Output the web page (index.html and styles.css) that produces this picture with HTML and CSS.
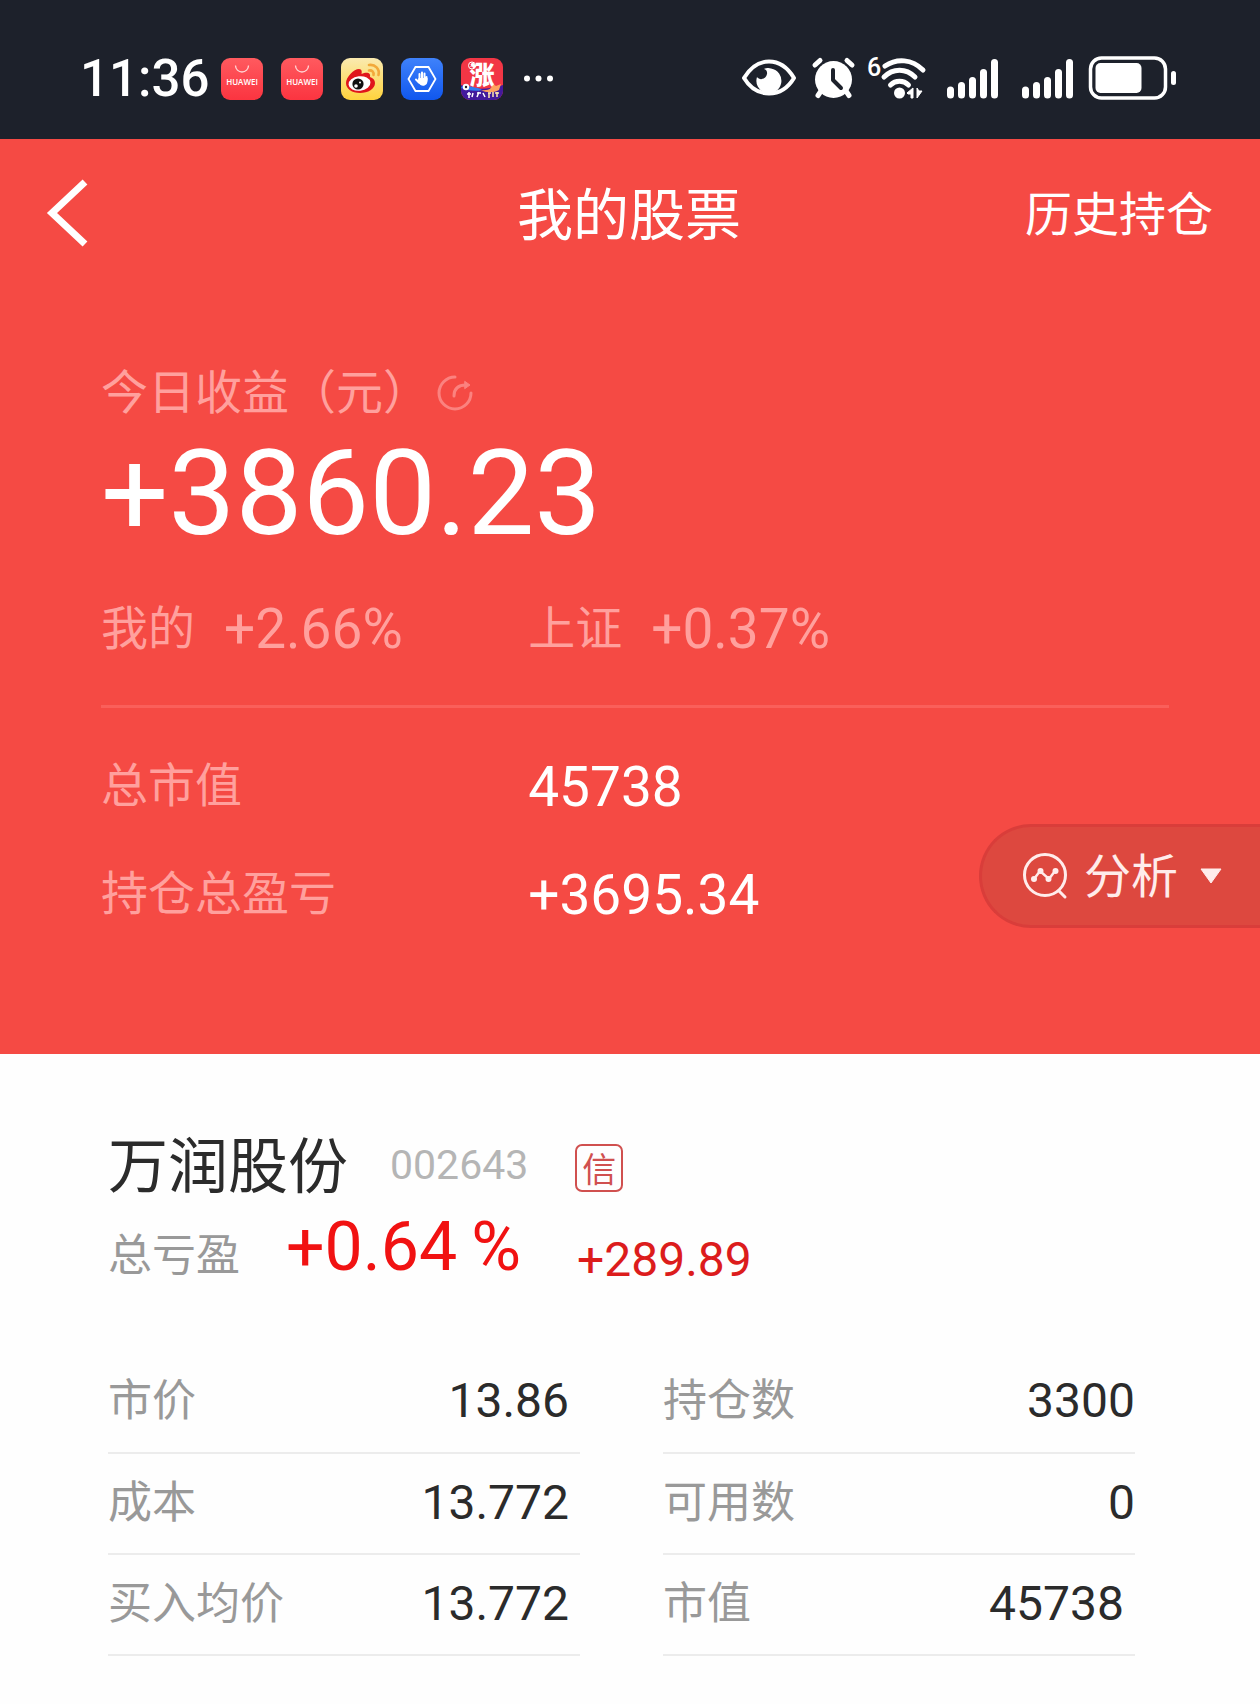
FILE: index.html
```html
<!DOCTYPE html>
<html lang="zh-CN">
<head>
<meta charset="utf-8">
<meta name="viewport" content="width=device-width, initial-scale=1">
<title>我的股票</title>
<link rel="stylesheet" href="styles.css">
</head>
<body>
<div class="status">
  <time class="clock">11:36</time>
  <div class="apps">
    <svg width="42" height="42" viewBox="0 0 42 42"><defs><linearGradient id="hw" x2="0" y2="1"><stop stop-color="#ff5a5f"/><stop offset="1" stop-color="#fb3440"/></linearGradient></defs><rect width="42" height="42" rx="9" fill="url(#hw)"/><path d="M14.500 7.500a6.500 6.500 0 0 0 13 0" fill="none" stroke="#ffd5d5" stroke-width="1.300"/><text class="brand" x="21" y="27" text-anchor="middle">HUAWEI</text></svg>
    <svg width="42" height="42" viewBox="0 0 42 42"><rect width="42" height="42" rx="9" fill="url(#hw)"/><path d="M14.500 7.500a6.500 6.500 0 0 0 13 0" fill="none" stroke="#ffd5d5" stroke-width="1.300"/><text class="brand" x="21" y="27" text-anchor="middle">HUAWEI</text></svg>
    <svg width="42" height="42" viewBox="0 0 42 42"><defs><linearGradient id="wb" x2="0" y2="1"><stop stop-color="#faeab0"/><stop offset="1" stop-color="#ffd33c"/></linearGradient></defs><rect width="42" height="42" rx="9" fill="url(#wb)"/><path d="M5 25C5 19 13 11 18 11c3 0 3 3 2.500 5C25 14 30 14 29 19c3 1 5 3 5 6 0 6-7 10-15 10S5 31 5 25z" fill="#e0161c"/><ellipse cx="18.500" cy="25.500" rx="11" ry="7.200" fill="#fff" transform="rotate(-6 18.500 25.500)"/><circle cx="17" cy="26" r="5.600" fill="#111"/><circle cx="15" cy="28" r="1.800" fill="#fff"/><circle cx="19" cy="24.500" r="1" fill="#fff"/><g fill="none" stroke="#f2a93b" stroke-width="2.600" stroke-linecap="round"><path d="M28 7c6-1 11 4 9.500 10"/><path d="M28 12.500c3-.5 5 1.500 4.500 4.500"/></g></svg>
    <svg width="42" height="42" viewBox="0 0 42 42"><defs><linearGradient id="bl" x2="0" y2="1"><stop stop-color="#3f82fb"/><stop offset="1" stop-color="#1057ee"/></linearGradient></defs><rect width="42" height="42" rx="9" fill="url(#bl)"/><path d="M14.500 9h13L34.500 21l-7 12h-13L7.500 21z" fill="none" stroke="#fff" stroke-width="1.800"/><g stroke="#fff" stroke-width="2" stroke-linecap="round"><path d="M18.500 22v-6M21 22v-7.500M23.500 22v-6.500M15 21.500l3 3M25.500 22v-3"/></g><path d="M17.500 20h9v3.500a4.500 4.500 0 0 1-7 3.500l-3-3z" fill="#fff"/></svg>
    <svg width="42" height="42" viewBox="0 0 42 42"><defs><clipPath id="rc"><rect width="42" height="42" rx="9"/></clipPath></defs><g clip-path="url(#rc)"><rect width="42" height="42" fill="#f23645"/><path d="M0 27c10 5 28 5 42 0v15H0z" fill="#431a9c"/><path d="M3 26c8 4 14 3 18 6-7 2-15 0-21-2z" fill="#317bf0"/><path d="M20 32c8 1 11-2 12-6l3 2 5-2-2 6c-5 3-13 3-18 0z" fill="#ffa25f"/><circle cx="5" cy="29" r="3.200" fill="#fff"/><circle cx="5" cy="29" r="1.200" fill="#222"/><circle cx="11" cy="7.500" r="3.500" fill="none" stroke="#fff"/><path d="M9.500 9l3-3M10 6h2.500v2.500" stroke="#fff" fill="none"/><g stroke="#fff" stroke-width="1.500" fill="none"><path d="M6 36h4M8 34v6M12 35l-1 4M16 35h4M18 34l-2 5M22 35l2 4"/><path d="M27 35h3M28 35v5M32 34v5M34 35h4M36 34v5" stroke="#ffe9ae"/></g></g><text class="rise" x="21" y="26" text-anchor="middle">涨</text></svg>
    <svg width="42" height="42" viewBox="0 0 42 42" fill="#fff"><circle cx="6" cy="20.500" r="3"/><circle cx="17.500" cy="20.500" r="3"/><circle cx="29" cy="20.500" r="3"/></svg>
  </div>
  <div class="signals">
    <svg width="57" height="44" viewBox="0 0 57 44"><path d="M2 21C8 11 16 4.500 27 4.500s19 6.500 25 16.500c-6 10-14 15.500-25 15.500S8 31 2 21z" fill="none" stroke="#fff" stroke-width="4" stroke-linejoin="round"/><path d="M29 11.500A12.500 12.500 0 1 1 15 20c3 4 9 2 10-3 .5-3-1-4.500-3-5 2-1 5-1.500 7-.5z" fill="#fff"/></svg>
    <svg width="43" height="44" viewBox="0 0 43 44"><g stroke="#fff" stroke-width="5" stroke-linecap="round"><path d="M3 8l5-4.500M40 8l-5-4.500M9 34l-3 4.500M34 34l3 4.500"/></g><circle cx="21.500" cy="22.500" r="18.500" fill="#fff"/><path d="M21 13v10l8 8" fill="none" stroke="#1d212b" stroke-width="4" stroke-linecap="round" stroke-linejoin="round"/></svg>
    <svg width="66" height="44" viewBox="0 0 66 44"><text class="gen" x="-1" y="19">6</text><g fill="none" stroke="#fff" stroke-width="5" stroke-linecap="round"><path d="M17 9c12-8 27-7 38 4M16 20c9-9 22-9 31 0M22.500 28c5-5 13-5 18 0"/></g><circle cx="31.500" cy="36" r="5.500" fill="#fff"/><path d="M39 36l6-5v10h-2v-4h-3zM49 31v10l5-7h-3z" fill="#fff" stroke="#fff"/></svg>
    <svg width="62" height="44" viewBox="0 0 62 44"><g stroke="#fff" stroke-width="7" stroke-linecap="round"><path d="M3.500 33v5M14.500 28.500V38M25.500 23.500V38M36.500 15.500V38M47.500 5.500V38"/></g></svg>
    <svg width="54" height="44" viewBox="0 0 54 44"><g stroke="#fff" stroke-width="7" stroke-linecap="round"><path d="M3.500 33v5M14.500 28.500V38M25.500 23.500V38M36.500 15.500V38M47.500 5.500V38"/></g></svg>
    <svg width="87" height="44" viewBox="0 0 87 44"><rect x="1.500" y="1" width="75" height="40" rx="11" fill="none" stroke="#fff" stroke-width="3.500"/><rect x="6.500" y="6" width="46" height="30" rx="5" fill="#fff"/><rect x="82" y="14" width="5" height="14" rx="2.500" fill="#fff"/></svg>
  </div>
</div>

<main>
  <section class="hero">
    <header class="bar">
      <a class="back" href="#" aria-label="返回"><svg width="44" height="72" viewBox="0 0 44 72"><path d="M40 5L7 36l33 31" fill="none" stroke="#fff" stroke-width="7"/></svg></a>
      <h1 class="title">我的股票</h1>
      <a class="history" href="#">历史持仓</a>
    </header>
    <div class="summary">
      <p class="caption">今日收益（元）<button class="refresh" type="button" aria-label="刷新"><svg width="38" height="38" viewBox="0 0 38 38" fill="none" stroke="#fb827f" stroke-width="3" stroke-linecap="round"><path d="M19 3A16 16 0 1 0 35 19"/><path d="M18 22c0-6 3-11 12-11"/><path d="M29 7.500l5 3.500-5 3.500z" fill="#fb827f" stroke-width="1"/></svg></button></p>
      <p class="profit">+3860.23</p>
      <dl class="rates">
        <div class="rate"><dt>我的</dt><dd>+2.66%</dd></div>
        <div class="rate"><dt>上证</dt><dd>+0.37%</dd></div>
      </dl>
      <dl class="totals">
        <dt>总市值</dt><dd>45738</dd>
        <dt>持仓总盈亏</dt><dd>+3695.34</dd>
      </dl>
    </div>
    <button class="analyse" type="button">
      <svg width="46" height="48" viewBox="0 0 46 48" fill="none" stroke="#ffeceb" stroke-width="3" stroke-linecap="round"><circle cx="23" cy="23" r="20.500"/><path d="M37 39l6 6"/><path d="M12 27l6-8 9 8 6-8" stroke-width="2.500"/><g fill="#ffeceb" stroke="none"><circle cx="12" cy="27" r="3"/><circle cx="18.500" cy="19" r="3"/><circle cx="26.500" cy="27" r="3"/><circle cx="33.500" cy="19" r="3"/></g></svg>
      <span class="analyse-text">分析</span>
      <svg class="caret" width="22" height="16" viewBox="0 0 22 16"><path d="M1 1h20L11 15z" fill="#ffeceb" stroke="#ffeceb" stroke-linejoin="round"/></svg>
    </button>
  </section>

  <article class="holding">
    <div class="stock">
      <h2 class="name">万润股份</h2>
      <span class="code">002643</span>
      <span class="badge">信</span>
    </div>
    <div class="gain">
      <span class="gain-label">总亏盈</span>
      <span class="gain-rate">+0.64<span>%</span></span>
      <span class="gain-sum">+289.89</span>
    </div>
    <div class="details">
      <table>
        <tr><th scope="row">市价</th><td class="inset">13.86</td></tr>
        <tr><th scope="row">成本</th><td class="inset">13.772</td></tr>
        <tr><th scope="row">买入均价</th><td class="inset">13.772</td></tr>
      </table>
      <table>
        <tr><th scope="row">持仓数</th><td>3300</td></tr>
        <tr><th scope="row">可用数</th><td>0</td></tr>
        <tr><th scope="row">市值</th><td class="inset">45738</td></tr>
      </table>
    </div>
  </article>
</main>
</body>
</html>
```
FILE: styles.css
```css
* { box-sizing: border-box; }

body {
  margin: 0;
  background: #fefefe;
  color: #2b2b2b;
  font-family: "Noto Sans CJK SC", sans-serif;
}

h1, h2, p, dl, dt, dd { margin: 0; font-weight: 400; }
a { color: inherit; text-decoration: none; }
button { margin: 0; border: 0; background: none; color: inherit; font: inherit; cursor: pointer; }
svg { display: block; flex: none; overflow: visible; }

/* Figures */
.clock, .profit, dd, .code, .gain-rate, .gain-sum, td { font-family: Roboto, sans-serif; }

/* Phone status bar */
.status {
  display: flex;
  align-items: center;
  height: 139px;
  padding: 18px 84px 0 80px;
  background: #1d212b;
  color: #fff;
}
.clock { width: 141px; font-size: 51px; line-height: 60px; font-weight: 500; }
.apps { display: flex; gap: 18px; }
.signals { display: flex; gap: 13px; margin-left: auto; }
.brand { fill: #fff; font: 600 8px "Open Sans", sans-serif; }
.rise { fill: #fff; font: 900 25px "Noto Sans CJK SC", sans-serif; }
.gen { fill: #fff; font: 500 25px Roboto, sans-serif; }

/* Red overview */
.hero { position: relative; background: #f54a44; color: #fff; }
.bar {
  display: grid;
  grid-template-columns: 1fr auto 1fr;
  align-items: center;
  height: 148px;
  padding: 0 47px 0 45px;
}
.title, .history { padding-bottom: 4px; line-height: 60px; }
.title { font-size: 56px; }
.history { justify-self: end; font-size: 47px; }

.summary { padding: 72px 91px 110px 101px; }
.caption {
  display: flex;
  align-items: center;
  color: #ffa09d;
  font-size: 47px;
  line-height: 60px;
}
.refresh { padding: 8px 0 0 6px; }
.profit { margin-top: 15px; font-size: 119px; line-height: 120px; }
.rates {
  display: grid;
  grid-template-columns: 2fr 3fr;
  margin-top: 41px;
  padding-bottom: 46px;
  border-bottom: 3px solid #fa5f5a;
  color: #ffa09d;
  line-height: 60px;
}
.rate { display: flex; gap: 29px; }
.rates dt, .totals dt { font-size: 47px; }
.rates dd, .totals dd { font-size: 55px; }
.rates dd { padding-top: 4px; }
.totals {
  display: grid;
  grid-template-columns: 2fr 3fr;
  padding-top: 20px;
  line-height: 108px;
}
.totals dt { color: #ffa09d; }
.totals dd { padding-top: 10px; line-height: 98px; }

.analyse {
  position: absolute;
  right: 0;
  bottom: 126px;
  display: flex;
  align-items: center;
  gap: 16px;
  height: 104px;
  padding: 0 38px 0 40px;
  border: 3px solid #d93d3a;
  border-right: 0;
  border-radius: 52px 0 0 52px;
  background: #dd483f;
  color: #ffeceb;
  font-size: 47px;
  line-height: 60px;
}
.analyse-text { padding-bottom: 6px; }
.caret { margin-left: 6px; }

/* Holding card */
.holding { padding: 68px 125px 47px 108px; }
.stock { display: flex; align-items: center; height: 80px; }
.name { font-size: 60px; line-height: 80px; }
.code { margin-left: 42px; padding-top: 6px; color: #b5b5b5; font-size: 41px; line-height: 60px; }
.badge {
  width: 48px;
  height: 48px;
  margin: 12px 0 0 47px;
  border: 2px solid #d0504f;
  border-radius: 7px;
  color: #d0504f;
  font-size: 34px;
  line-height: 44px;
  text-align: center;
}
.gain { display: flex; align-items: flex-end; height: 80px; }
.gain-label { color: #999; font-size: 44px; line-height: 60px; }
.gain-rate { display: flex; gap: 14px; margin-left: 46px; color: #f11212; font-size: 68px; line-height: 70px; }
.gain-sum { margin-left: 56px; color: #dc1c1c; font-size: 48px; line-height: 44px; }

.details { display: grid; grid-template-columns: 1fr 1fr; gap: 83px; margin-top: 70px; }
table { width: 100%; border-collapse: collapse; }
th, td {
  height: 101px;
  padding: 0 0 10px;
  border-bottom: 2px solid #ececec;
  line-height: 60px;
}
th { color: #999; font-size: 44px; font-weight: 400; text-align: left; }
td { padding: 4px 0 6px; font-size: 48px; text-align: right; }
.inset { padding-right: 11px; }
```
